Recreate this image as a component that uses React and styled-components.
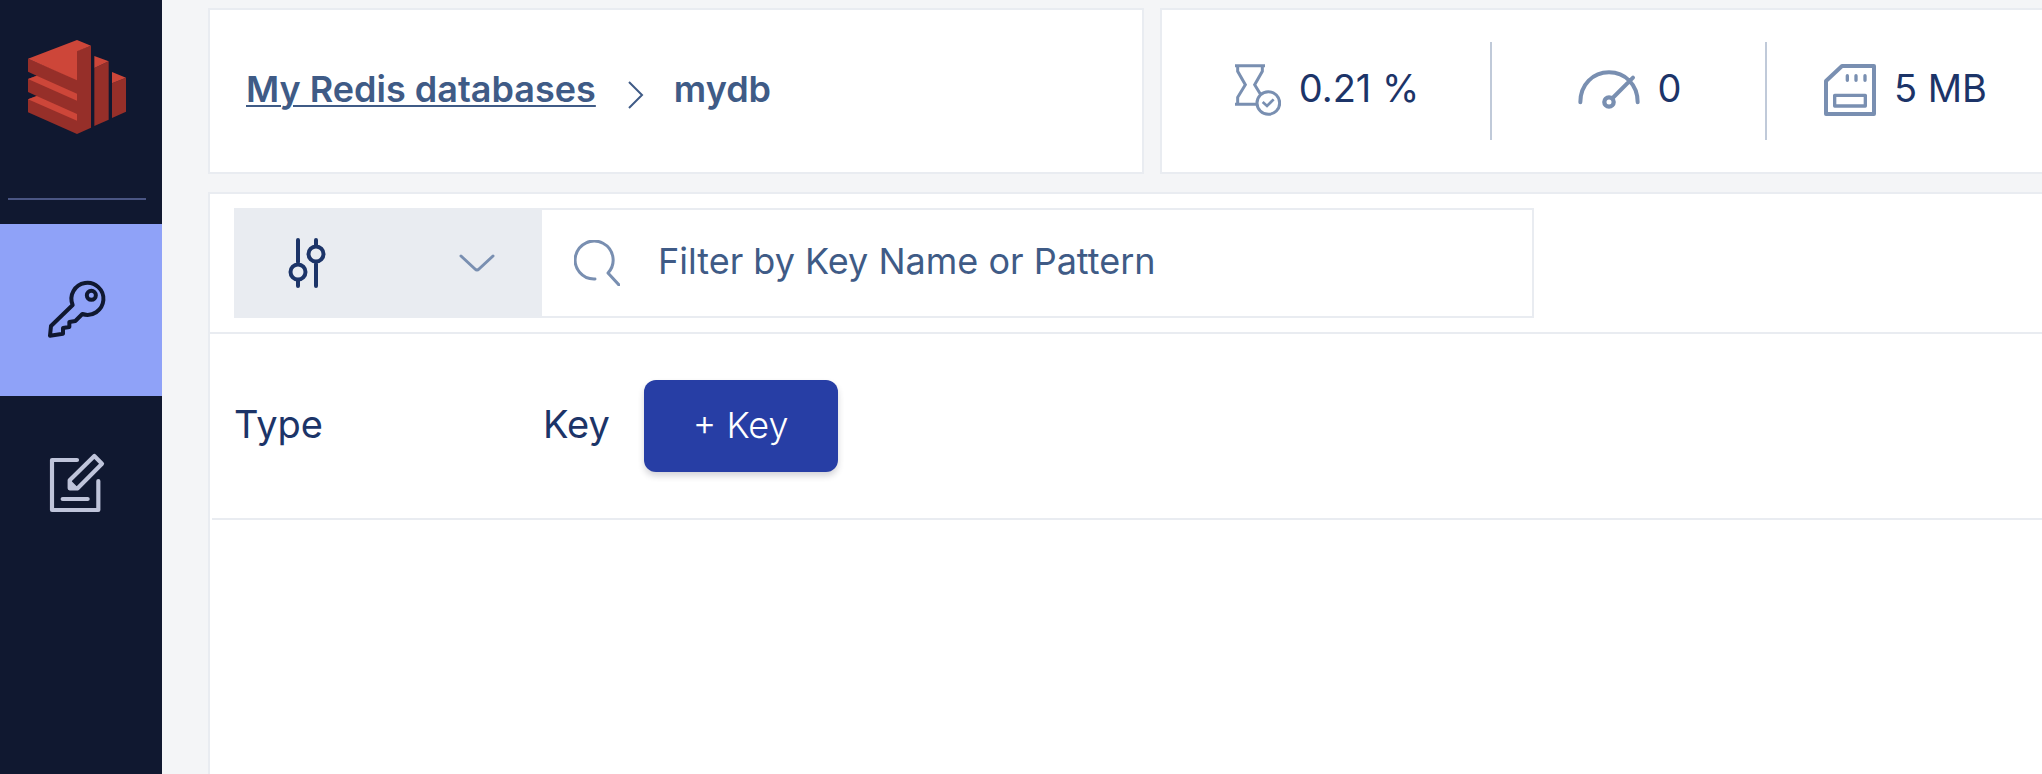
import React from 'react';
import styled, { createGlobalStyle } from 'styled-components';

const c = {
  nav: '#101830',
  navRule: '#4a5583',
  active: '#8fa2f8',
  page: '#f4f5f7',
  border: '#e9ecf1',
  text: '#1c3468',
  soft: '#3f5b86',
  icon: '#798fb1',
  primary: '#273ea5',
};

const GlobalStyle = createGlobalStyle`
  *, *::before, *::after { box-sizing: border-box; }
  body {
    margin: 0;
    background: ${c.page};
    color: ${c.text};
    font-family: Inter, "Liberation Sans", sans-serif;
    font-size: 36px;
    line-height: 48px;
  }
  svg { display: block; flex: none; }
`;

const Layout = styled.div`
  display: flex;
  min-height: 100vh;
`;

const Sidebar = styled.aside`
  flex: 0 0 162px;
  background: ${c.nav};
`;

const LogoLink = styled.a`
  display: flex;
  justify-content: center;
  height: 198px;
  padding: 40px 8px 0 0;
`;

const SidebarRule = styled.hr`
  height: 2px;
  margin: 0 16px 24px 8px;
  border: 0;
  background: ${c.navRule};
`;

const NavLink = styled.a`
  display: flex;
  align-items: center;
  justify-content: center;
  height: 172px;
  padding-right: 8px;
  color: ${(p) => (p.$active ? c.nav : '#bfc4da')};
  background: ${(p) => (p.$active ? c.active : 'transparent')};
`;

const Main = styled.main`
  flex: 1;
  min-width: 0;
  display: flex;
  flex-direction: column;
  padding: 8px 0 0 46px;
`;

const Header = styled.header`
  display: grid;
  grid-template-columns: 52fr 49fr;
  gap: 16px;
  margin-bottom: 18px;
`;

const Panel = styled.div`
  height: 166px;
  border: 2px solid ${c.border};
  background: #fff;
`;

const Breadcrumb = styled(Panel).attrs({ as: 'nav' })`
  display: flex;
  align-items: center;
  padding: 0 36px 5px;
  color: ${c.soft};
  font-weight: 600;
  white-space: nowrap;

  svg { margin: 12px 30px 0 32px; }
`;

const CrumbLink = styled.a`
  color: inherit;
  text-decoration: underline;
  text-decoration-thickness: 2px;
  text-underline-offset: 3px;
`;

const Stats = styled(Panel)`
  display: grid;
  grid-template-columns: 6fr 5fr 5fr;
  align-items: center;
  border-right: 0;
`;

const Stat = styled.div`
  display: flex;
  align-items: center;
  justify-content: center;
  gap: 18px;
  height: 98px;
  padding: 0 0 2px 2px;
  border-right: 2px solid #c0cad9;
  font-size: 38px;
  white-space: nowrap;

  &:last-child { border-right: 0; }
  svg { color: ${c.icon}; }
`;

const StatValue = styled.span`
  padding-bottom: 5px;
`;

const Browser = styled.section`
  flex: 1;
  border: 2px solid ${c.border};
  border-width: 2px 0 0 2px;
  background: #fff;
`;

const FilterBar = styled.form`
  padding: 14px 24px;
  border-bottom: 2px solid ${c.border};
`;

const FilterBox = styled.div`
  display: flex;
  max-width: 1300px;
  height: 110px;
  border: 2px solid ${c.border};
`;

const TypePicker = styled.label`
  position: relative;
  flex: 0 0 306px;
  display: flex;
  align-items: center;
  justify-content: space-between;
  padding: 0 47px 0 52px;
  background: ${c.border};
`;

const TypeSelect = styled.select`
  position: absolute;
  inset: 0;
  width: 100%;
  opacity: 0;
  cursor: pointer;
`;

const SearchField = styled.label`
  flex: 1;
  min-width: 0;
  display: flex;
  align-items: center;
  gap: 38px;
  padding-left: 32px;
  color: ${c.icon};
`;

const SearchInput = styled.input`
  flex: 1;
  min-width: 0;
  height: 100%;
  padding: 0 0 5px;
  border: 0;
  outline: 0;
  background: transparent;
  color: ${c.text};
  font: inherit;

  &::placeholder { color: ${c.soft}; opacity: 1; }
`;

const TableWrap = styled.div`
  padding-left: 2px;
`;

const KeyTable = styled.table`
  width: 100%;
  border-collapse: separate;
  border-spacing: 0;
  table-layout: fixed;
`;

const HeadCell = styled.th`
  width: ${(p) => p.$width || 'auto'};
  height: 186px;
  padding: 0 0 0 ${(p) => p.$inset || 0}px;
  border-bottom: 2px solid ${c.border};
  font-size: 38px;
  font-weight: 400;
  text-align: left;
`;

const HeadContent = styled.div`
  display: flex;
  align-items: center;
  gap: 34px;
`;

const HeadLabel = styled.span`
  padding-bottom: 5px;
`;

const AddButton = styled.button`
  height: 92px;
  padding: 0 49px 3px;
  border: 0;
  border-radius: 12px;
  background: ${c.primary};
  box-shadow: 0 4px 6px rgba(40, 40, 60, 0.2);
  color: #fff;
  font: inherit;
  font-size: 36px;
  font-weight: 300;
  cursor: pointer;
`;

const Logo = () => (
  <svg width="98" height="94" viewBox="84 120 294 282" aria-hidden="true">
    <g fill="#962f29">
      <path d="M84 176 231 238V152L273 137V383L231 402 84 337V298L110 288 84 276V237L110 227 84 215Z" />
      <path d="M283 204 326 184V359L283 378ZM336 250 378 233V335L336 354Z" />
    </g>
    <g fill="#cd4639">
      <path d="M84 176 231 120 273 137 231 154V241Z" />
      <path d="M84 237 110 227 231 281V302ZM84 298 110 288 231 342V362Z" />
      <path d="M283 168 326 184 283 204ZM336 216 378 233 336 250Z" />
    </g>
  </svg>
);

const KeyIcon = () => (
  <svg width="62" height="62" viewBox="138 176 186 186" fill="none" stroke="currentColor" strokeWidth="12" strokeLinejoin="round" aria-hidden="true">
    <path d="M218 254A48 48 0 1 1 247 281L226 302 208 305V320L189 323V340L150 346 153 317Z" />
    <circle cx="274" cy="225" r="13.5" />
  </svg>
);

const EditIcon = () => (
  <svg width="62" height="62" viewBox="138 693 186 186" fill="none" stroke="currentColor" strokeWidth="12.5" strokeLinecap="round" strokeLinejoin="round" aria-hidden="true">
    <path d="M231 720H156V870H295V783M188 837H263" />
    <path d="M209 805V781L283 708 306 731 233 805Z" />
    <path d="M209 805V781L233 805Z" fill="currentColor" strokeWidth="4" />
  </svg>
);

const ChevronRight = () => (
  <svg width="16" height="28" viewBox="0 0 16 28" fill="none" stroke={c.soft} strokeWidth="2" aria-hidden="true">
    <path d="M1 1 14 14 1 27" />
  </svg>
);

const HourglassIcon = () => (
  <svg width="46" height="52" viewBox="318 192 138 156" fill="none" stroke="currentColor" strokeWidth="9" aria-hidden="true">
    <path d="M318 197H408M318 313H384" />
    <path d="M326 198V214L349 254 326 292V314M400 198V214L377 254 394 282" />
    <circle cx="418" cy="309" r="34" />
    <path d="M401 306 414 318 434 298" strokeWidth="8" />
  </svg>
);

const GaugeIcon = () => (
  <svg width="62" height="40" viewBox="108 211 186 120" fill="none" stroke="currentColor" strokeWidth="12" strokeLinecap="round" aria-hidden="true">
    <path d="M115 308C115 255 153 218 201 218S287 255 287 308M212 295 273 234" />
    <circle cx="201" cy="307" r="14" strokeWidth="13" />
  </svg>
);

const MemoryIcon = () => (
  <svg width="52" height="52" viewBox="852 192 156 156" fill="none" stroke="currentColor" strokeLinejoin="round" strokeLinecap="round" aria-hidden="true">
    <path d="M858 243 906 198H1002V342H858Z" strokeWidth="12" />
    <path d="M922 227V241M948 227V241M975 227V241M884 286H976V318H884Z" strokeWidth="10" />
  </svg>
);

const SlidersIcon = () => (
  <svg width="40" height="52" viewBox="0 0 40 52" fill="none" stroke={c.text} strokeWidth="4" strokeLinecap="round" aria-hidden="true">
    <path d="M10 3V25M10 43V49M28 3V9M28 27V49" />
    <circle cx="10" cy="35" r="7.5" />
    <circle cx="28" cy="17" r="7.5" />
  </svg>
);

const ChevronDown = () => (
  <svg width="36" height="18" viewBox="0 0 36 18" fill="none" stroke={c.icon} strokeWidth="3" strokeLinecap="round" aria-hidden="true">
    <path d="M2 2 16 15Q18 17 20 15L34 2" />
  </svg>
);

const SearchIcon = () => (
  <svg width="46" height="46" viewBox="0 0 46 46" fill="none" stroke="currentColor" strokeWidth="3" strokeLinecap="round" strokeLinejoin="round" aria-hidden="true">
    <path d="M21 39A19 19 0 1 1 34 33L45 45" />
  </svg>
);

export default function App() {
  return (
    <>
      <GlobalStyle />
      <Layout>
        <Sidebar>
          <LogoLink href="#home" aria-label="Redis home"><Logo /></LogoLink>
          <SidebarRule />
          <nav aria-label="Main">
            <NavLink href="#browser" aria-label="Browser" aria-current="page" $active><KeyIcon /></NavLink>
            <NavLink href="#workbench" aria-label="Workbench"><EditIcon /></NavLink>
          </nav>
        </Sidebar>
        <Main>
          <Header>
            <Breadcrumb aria-label="Breadcrumb">
              <CrumbLink href="#databases">My Redis databases</CrumbLink>
              <ChevronRight />
              <span>mydb</span>
            </Breadcrumb>
            <Stats>
              <Stat><HourglassIcon /><StatValue>0.21 %</StatValue></Stat>
              <Stat><GaugeIcon /><StatValue>0</StatValue></Stat>
              <Stat><MemoryIcon /><StatValue>5 MB</StatValue></Stat>
            </Stats>
          </Header>
          <Browser>
            <FilterBar onSubmit={(e) => e.preventDefault()}>
              <FilterBox>
                <TypePicker>
                  <SlidersIcon />
                  <ChevronDown />
                  <TypeSelect aria-label="Key type"><option value="all" aria-label="All key types" /></TypeSelect>
                </TypePicker>
                <SearchField>
                  <SearchIcon />
                  <SearchInput type="text" aria-label="Filter by Key Name or Pattern" placeholder="Filter by Key Name or Pattern" />
                </SearchField>
              </FilterBox>
            </FilterBar>
            <TableWrap>
              <KeyTable>
                <thead>
                  <tr>
                    <HeadCell scope="col" $width="331px" $inset={22}>
                      <HeadContent><HeadLabel>Type</HeadLabel></HeadContent>
                    </HeadCell>
                    <HeadCell scope="col">
                      <HeadContent>
                        <HeadLabel>Key</HeadLabel>
                        <AddButton type="button">+ Key</AddButton>
                      </HeadContent>
                    </HeadCell>
                  </tr>
                </thead>
              </KeyTable>
            </TableWrap>
          </Browser>
        </Main>
      </Layout>
    </>
  );
}
